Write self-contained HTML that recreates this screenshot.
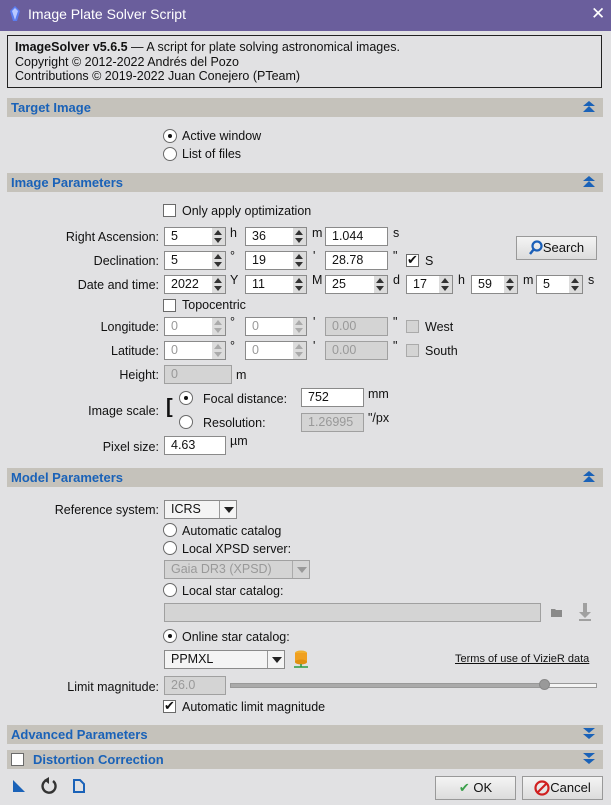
<!DOCTYPE html>
<html><head><meta charset="utf-8"><style>
*{box-sizing:border-box;margin:0;padding:0}
body{width:611px;height:805px;background:#e1e1e3;font-family:"Liberation Sans","DejaVu Sans",sans-serif;font-size:12.5px;color:#111;position:relative;overflow:hidden}
.a{position:absolute;white-space:nowrap}
.title{left:0;top:0;width:611px;height:31px;background:#6a5e9c;color:#fff;font-size:14px}
.hdr{left:7px;width:596px;height:19px;background:#c5c2bb;color:#1a62b8;font-weight:bold;font-size:13px;line-height:19px;padding-left:4px}
.hdr .ar{position:absolute;right:8px;top:3px}
.in{height:19px;background:#fff;border:1px solid #8a8a8a;line-height:17px;padding-left:6px}
.dis{background:#d4d4d4;color:#999;border-color:#a0a0a0}
.sp{height:19px;border:1px solid #8a8a8a;background:#fff;line-height:17px;padding-left:6px}
.sp:after{content:"";position:absolute;right:0;top:0;width:13px;height:17px;background:#dcdcdc}
.sp i{position:absolute;right:3px;width:0;height:0;border-left:4px solid transparent;border-right:4px solid transparent;z-index:2}
.sp i.u{top:2px;border-bottom:5px solid #333}
.sp i.d{bottom:2px;border-top:5px solid #333}
.sp.dis i.u{border-bottom-color:#aaa}.sp.dis i.d{border-top-color:#aaa}
.cb{width:13px;height:13px;border:1px solid #6a6a6a;background:#fff}
.rb{width:14px;height:14px;border:1px solid #6a6a6a;border-radius:50%;background:#fff}
.rb.on:after{content:"";position:absolute;left:4px;top:4px;width:4px;height:4px;border-radius:50%;background:#111}
.lbl{text-align:right}
.btn{height:24px;border:1px solid #999;background:linear-gradient(#f4f4f4,#dcdcdc);line-height:22px;text-align:center;font-size:13px}
.u{font-size:11px}
</style></head><body>
<div class="a title"><svg class="a" style="left:9px;top:6px" width="12" height="16" viewBox="0 0 12 16"><path d="M6 0L11 5L8 15H4L1 5Z" fill="#5a7cf0"/><path d="M6 2L9 5L6 14L3 5Z" fill="#b8c8ff"/></svg><span class="a" style="left:28px;top:6px">Image Plate Solver Script</span><span class="a" style="left:591px;top:4px;font-size:17px">✕</span></div>

<div class="a" style="left:7px;top:35px;width:595px;height:53px;border:1px solid #222;padding:4px 0 0 7px;line-height:14.5px;font-size:12.5px"><b>ImageSolver v5.6.5</b> — A script for plate solving astronomical images.<br>Copyright © 2012-2022 Andrés del Pozo<br>Contributions © 2019-2022 Juan Conejero (PTeam)</div>

<div class="a hdr" style="top:98px">Target Image<svg class="ar" width="12" height="12" viewBox="0 0 12 12"><path d="M6 0L12 5H0Z M6 5L12 11H0Z" fill="#1a62b8"/></svg></div>
<div class="a rb on" style="left:163px;top:129px"></div><span class="a" style="left:182px;top:129px">Active window</span>
<div class="a rb" style="left:163px;top:147px"></div><span class="a" style="left:182px;top:147px">List of files</span>

<div class="a hdr" style="top:173px">Image Parameters<svg class="ar" width="12" height="12" viewBox="0 0 12 12"><path d="M6 0L12 5H0Z M6 5L12 11H0Z" fill="#1a62b8"/></svg></div>
<div class="a cb" style="left:163px;top:204px"></div><span class="a" style="left:182px;top:204px">Only apply optimization</span>

<span class="a lbl" style="right:452px;top:230px">Right Ascension:</span>
<div class="a sp" style="left:164px;top:227px;width:62px">5<i class="u"></i><i class="d"></i></div><span class="a" style="left:230px;top:226px">h</span>
<div class="a sp" style="left:245px;top:227px;width:62px">36<i class="u"></i><i class="d"></i></div><span class="a" style="left:312px;top:226px">m</span>
<div class="a in" style="left:325px;top:227px;width:63px">1.044</div><span class="a" style="left:393px;top:226px">s</span>
<div class="a btn" style="left:516px;top:236px;width:81px"><svg style="vertical-align:-3px" width="14" height="15" viewBox="0 0 14 15"><circle cx="8" cy="6" r="4.5" fill="none" stroke="#1a5fb8" stroke-width="2.2"/><path d="M5 9L1 14" stroke="#1a5fb8" stroke-width="2.5"/></svg>Search</div>

<span class="a lbl" style="right:452px;top:254px">Declination:</span>
<div class="a sp" style="left:164px;top:251px;width:62px">5<i class="u"></i><i class="d"></i></div><span class="a" style="left:230px;top:249px">°</span>
<div class="a sp" style="left:245px;top:251px;width:62px">19<i class="u"></i><i class="d"></i></div><span class="a" style="left:313px;top:249px">'</span>
<div class="a in" style="left:325px;top:251px;width:63px">28.78</div><span class="a" style="left:393px;top:249px">"</span>
<div class="a cb" style="left:406px;top:254px"><span class="a" style="left:0;top:-3px;font-size:13px;font-weight:bold">✔</span></div><span class="a" style="left:425px;top:254px">S</span>

<span class="a lbl" style="right:452px;top:278px">Date and time:</span>
<div class="a sp" style="left:164px;top:275px;width:62px">2022<i class="u"></i><i class="d"></i></div><span class="a" style="left:230px;top:273px">Y</span>
<div class="a sp" style="left:245px;top:275px;width:62px">11<i class="u"></i><i class="d"></i></div><span class="a" style="left:312px;top:273px">M</span>
<div class="a sp" style="left:325px;top:275px;width:63px">25<i class="u"></i><i class="d"></i></div><span class="a" style="left:393px;top:273px">d</span>
<div class="a sp" style="left:406px;top:275px;width:47px">17<i class="u"></i><i class="d"></i></div><span class="a" style="left:458px;top:273px">h</span>
<div class="a sp" style="left:471px;top:275px;width:47px">59<i class="u"></i><i class="d"></i></div><span class="a" style="left:523px;top:273px">m</span>
<div class="a sp" style="left:536px;top:275px;width:47px">5<i class="u"></i><i class="d"></i></div><span class="a" style="left:588px;top:273px">s</span>

<div class="a cb" style="left:163px;top:299px"></div><span class="a" style="left:182px;top:298px">Topocentric</span>

<span class="a lbl" style="right:452px;top:320px">Longitude:</span>
<div class="a sp dis" style="left:164px;top:317px;width:62px">0<i class="u"></i><i class="d"></i></div><span class="a" style="left:230px;top:315px">°</span>
<div class="a sp dis" style="left:245px;top:317px;width:62px">0<i class="u"></i><i class="d"></i></div><span class="a" style="left:313px;top:315px">'</span>
<div class="a in dis" style="left:325px;top:317px;width:63px">0.00</div><span class="a" style="left:393px;top:315px">"</span>
<div class="a cb" style="left:406px;top:320px;background:#d4d4d4;border-color:#aaa"></div><span class="a" style="left:425px;top:320px">West</span>

<span class="a lbl" style="right:452px;top:344px">Latitude:</span>
<div class="a sp dis" style="left:164px;top:341px;width:62px">0<i class="u"></i><i class="d"></i></div><span class="a" style="left:230px;top:339px">°</span>
<div class="a sp dis" style="left:245px;top:341px;width:62px">0<i class="u"></i><i class="d"></i></div><span class="a" style="left:313px;top:339px">'</span>
<div class="a in dis" style="left:325px;top:341px;width:63px">0.00</div><span class="a" style="left:393px;top:339px">"</span>
<div class="a cb" style="left:406px;top:344px;background:#d4d4d4;border-color:#aaa"></div><span class="a" style="left:425px;top:344px">South</span>

<span class="a lbl" style="right:452px;top:368px">Height:</span>
<div class="a in dis" style="left:164px;top:365px;width:68px">0</div><span class="a" style="left:236px;top:368px">m</span>

<span class="a lbl" style="right:452px;top:404px">Image scale:</span>
<span class="a" style="left:166px;top:396px;font-size:20px;font-weight:bold">[</span>
<div class="a rb on" style="left:179px;top:391px"></div><span class="a" style="left:203px;top:392px">Focal distance:</span>
<div class="a in" style="left:301px;top:388px;width:63px">752</div><span class="a" style="left:368px;top:387px">mm</span>
<div class="a rb" style="left:179px;top:415px"></div><span class="a" style="left:203px;top:416px">Resolution:</span>
<div class="a in dis" style="left:301px;top:413px;width:63px">1.26995</div><span class="a" style="left:368px;top:411px">"/px</span>

<span class="a lbl" style="right:452px;top:440px">Pixel size:</span>
<div class="a in" style="left:164px;top:436px;width:62px">4.63</div><span class="a" style="left:230px;top:434px">µm</span>

<div class="a hdr" style="top:468px">Model Parameters<svg class="ar" width="12" height="12" viewBox="0 0 12 12"><path d="M6 0L12 5H0Z M6 5L12 11H0Z" fill="#1a62b8"/></svg></div>
<span class="a lbl" style="right:452px;top:503px">Reference system:</span>
<div class="a in" style="left:164px;top:500px;width:73px;background:#f4f4f4">ICRS<span class="a" style="left:54px;top:0;width:1px;height:17px;background:#999"></span><span class="a" style="left:59px;top:6px;border-left:5px solid transparent;border-right:5px solid transparent;border-top:6px solid #222"></span></div>
<div class="a rb" style="left:163px;top:523px"></div><span class="a" style="left:182px;top:524px">Automatic catalog</span>
<div class="a rb" style="left:163px;top:541px"></div><span class="a" style="left:182px;top:542px">Local XPSD server:</span>
<div class="a in dis" style="left:164px;top:560px;width:146px">Gaia DR3 (XPSD)<span class="a" style="left:127px;top:0;width:1px;height:17px;background:#aaa"></span><span class="a" style="left:132px;top:6px;border-left:5px solid transparent;border-right:5px solid transparent;border-top:6px solid #999"></span></div>
<div class="a rb" style="left:163px;top:583px"></div><span class="a" style="left:182px;top:584px">Local star catalog:</span>
<div class="a in dis" style="left:164px;top:603px;width:377px"></div>
<svg class="a" style="left:551px;top:607px" width="12" height="11"><path d="M0 2H4L5 3H11V10H0Z" fill="#8a8a8a"/></svg>
<svg class="a" style="left:578px;top:603px" width="14" height="18"><path d="M5 0H9V9H13L7 15L1 9H5Z M1 16H13V18H1Z" fill="#a0a0a0"/></svg>
<div class="a rb on" style="left:163px;top:629px"></div><span class="a" style="left:182px;top:630px">Online star catalog:</span>
<div class="a in" style="left:164px;top:650px;width:121px;background:#f4f4f4">PPMXL<span class="a" style="left:102px;top:0;width:1px;height:17px;background:#999"></span><span class="a" style="left:107px;top:6px;border-left:5px solid transparent;border-right:5px solid transparent;border-top:6px solid #222"></span></div>
<svg class="a" style="left:293px;top:650px" width="16" height="19"><ellipse cx="8" cy="3" rx="6" ry="2.5" fill="#f0b030"/><rect x="2" y="3" width="12" height="9" fill="#f0a020"/><ellipse cx="8" cy="12" rx="6" ry="2.5" fill="#e09010"/><path d="M8 14V17M1 17H15" stroke="#2a9a40" stroke-width="1.5"/></svg>
<span class="a" style="left:455px;top:653px;font-size:11px;text-decoration:underline">Terms of use of VizieR data</span>
<span class="a lbl" style="right:452px;top:680px">Limit magnitude:</span>
<div class="a in dis" style="left:164px;top:676px;width:62px">26.0</div>
<div class="a" style="left:230px;top:683px;width:367px;height:5px;border:1px solid #999;background:linear-gradient(90deg,#aaa 86%,#f4f4f4 86%)"></div>
<div class="a" style="left:539px;top:679px;width:11px;height:11px;border-radius:50%;background:#999;border:1px solid #888"></div>
<div class="a cb" style="left:163px;top:700px"><span class="a" style="left:0;top:-3px;font-size:13px;font-weight:bold">✔</span></div><span class="a" style="left:182px;top:700px">Automatic limit magnitude</span>

<div class="a hdr" style="top:725px">Advanced Parameters<svg class="ar" width="12" height="12" viewBox="0 0 12 12"><path d="M0 0H12L6 5Z M0 6H12L6 11Z" fill="#1a62b8"/></svg></div>
<div class="a hdr" style="top:750px;padding-left:26px">Distortion Correction<div class="a cb" style="left:4px;top:3px"></div><svg class="ar" width="12" height="12" viewBox="0 0 12 12"><path d="M0 0H12L6 5Z M0 6H12L6 11Z" fill="#1a62b8"/></svg></div>

<svg class="a" style="left:13px;top:780px" width="12" height="12"><path d="M0 0L12 12H0Z" fill="#1a62b8"/></svg>
<svg class="a" style="left:40px;top:777px" width="18" height="18" viewBox="0 0 18 18"><path d="M7 3A6.5 6.5 0 1 0 13 4" fill="none" stroke="#333" stroke-width="2.4"/><path d="M9 0V7L4 3Z" fill="#333"/></svg>
<svg class="a" style="left:73px;top:779px" width="12" height="14"><path d="M1 1H7L11 5V13H1Z" fill="none" stroke="#1a62b8" stroke-width="2"/></svg>
<div class="a btn" style="left:435px;top:776px;width:81px"><span style="color:#3aa04a;font-weight:bold">✔</span> OK</div>
<div class="a btn" style="left:522px;top:776px;width:81px"><svg style="vertical-align:-4px" width="16" height="16"><circle cx="8" cy="8" r="6.5" fill="none" stroke="#d02020" stroke-width="2.2"/><path d="M3.5 12.5L12.5 3.5" stroke="#d02020" stroke-width="2.2"/></svg>Cancel</div>
</body></html>
